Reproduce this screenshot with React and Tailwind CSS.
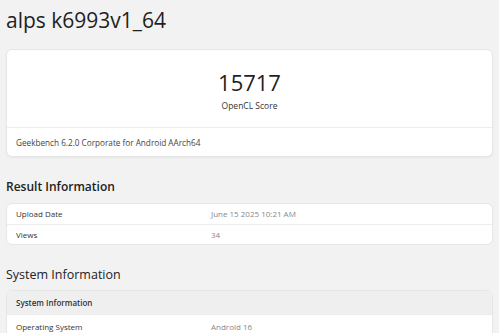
export default function App() {
  const result = [
    ['Upload Date', 'June 15 2025 10:21 AM'],
    ['Views', '34'],
  ];

  return (
    <div className="min-h-screen bg-[#f2f2f2] px-[6px] pb-6 text-[#222] antialiased" style={{ fontFamily: '"Open Sans", Lato, sans-serif' }}>
      <h1 className="pt-[3px] text-[21px] leading-[34px] text-[#1f1f1f]">alps k6993v1_64</h1>

      {/* score card */}
      <div className="mt-[12px] rounded-[6px] border border-[#e6e6e6] bg-white shadow-[0_1px_2px_rgba(0,0,0,0.05)]">
        <div className="flex h-[77px] flex-col items-center justify-center pt-[3px]">
          <div className="text-[22px] leading-[28px] text-[#1f1f1f]">15717</div>
          <div className="mt-[4px] text-[8.5px] leading-[12px] text-[#333]">OpenCL Score</div>
        </div>
        <div className="flex h-[29px] items-center border-t border-[#ececec] px-[9px] pt-[3px] text-[8.2px] text-[#444]">
          Geekbench 6.2.0 Corporate for Android AArch64
        </div>
      </div>

      {/* result information */}
      <h2 className="mt-[20px] text-[12px] font-semibold leading-[20px] text-[#222]">Result Information</h2>
      <div className="mt-[6px] overflow-hidden rounded-[6px] border border-[#e6e6e6] bg-white">
        {result.map(([k, v], i) => (
          <div key={k} className={`flex h-[20px] items-center text-[8px] ${i > 0 ? 'border-t border-[#ececec]' : ''}`}>
            <div className="w-[204px] pl-[9px] font-medium text-[#333]">{k}</div>
            <div className="text-[#888]">{v}</div>
          </div>
        ))}
      </div>

      {/* system information */}
      <h2 className="mt-[19px] text-[12.5px] font-medium leading-[22px] text-[#222]">System Information</h2>
      <div className="mt-[4px] overflow-hidden rounded-[6px] border border-[#e6e6e6] bg-white">
        <div className="flex h-[23px] items-center bg-[#efefef] pl-[9px] text-[8px] font-semibold text-[#333]">
          System Information
        </div>
        <div className="flex h-[24px] items-center border-t border-[#ececec] text-[8px]">
          <div className="w-[204px] pl-[9px] font-medium text-[#333]">Operating System</div>
          <div className="text-[#888]">Android 16</div>
        </div>
      </div>
    </div>
  );
}
